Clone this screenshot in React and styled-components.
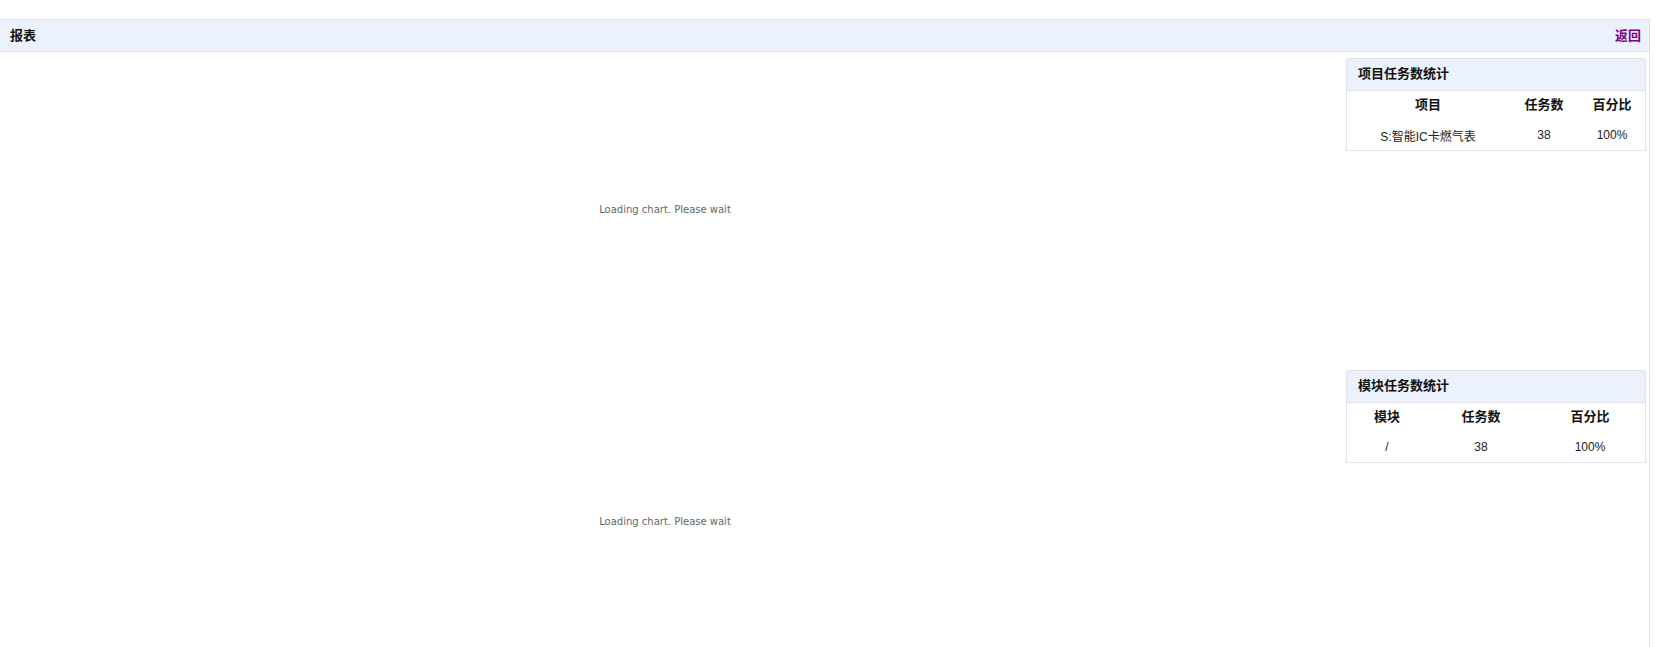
import React from 'react'
import styled, { createGlobalStyle } from 'styled-components'

const GlobalStyle = createGlobalStyle`
  html, body {
    margin: 0;
    padding: 0;
    background: #fff;
  }
  body {
    font-family: Arial, "Liberation Sans", "Noto Sans CJK SC", sans-serif;
    font-size: 12px;
    color: #333;
  }
`;

const Page = styled.div`
  padding-top: 19px;
  width: 1650px;
`;

const Frame = styled.div`
  border-right: 1px solid #dde2ea;
  min-height: 640px;
`;

const Header = styled.div`
  display: flex;
  align-items: center;
  justify-content: space-between;
  box-sizing: border-box;
  height: 33px;
  padding: 0 8px 3px 10px;
  background: #ebf1fd;
  border-top: 1px solid #dde2ea;
  border-bottom: 1px solid #dde2ea;
`;

const HeaderTitle = styled.span`
  font-family: "Noto Sans CJK SC", sans-serif;
  font-weight: bold;
  font-size: 13px;
  color: #111;
`;

const BackLink = styled.a`
  font-family: "Noto Sans CJK SC", sans-serif;
  font-weight: bold;
  font-size: 13px;
  color: #800080;
  text-decoration: none;
  cursor: pointer;
`;

const Body = styled.div`
  display: grid;
  grid-template-columns: 1330px 300px;
  grid-auto-rows: 312px;
  column-gap: 16px;
  padding-right: 3px;
`;

const Chart = styled.div`
  display: flex;
  align-items: center;
  justify-content: center;
  padding-top: 2px;
  font-family: "DejaVu Sans", Verdana, sans-serif;
  font-size: 10px;
  color: #666;
`;

const Side = styled.div`
  padding-top: 6px;
`;

const Card = styled.div`
  border: 1px solid #e0e3e8;
  background: #fff;
`;

const CardTitle = styled.div`
  box-sizing: border-box;
  height: 32px;
  display: flex;
  align-items: center;
  padding: 0 0 5px 11px;
  background: #ebf1fd;
  border-bottom: 1px solid #e0e3e8;
  font-family: "Noto Sans CJK SC", sans-serif;
  font-weight: bold;
  font-size: 13px;
  color: #111;
`;

const Table = styled.table`
  width: 100%;
  border-collapse: collapse;
  table-layout: fixed;
`;

const Th = styled.th`
  height: 25px;
  padding: 0 0 4px;
  text-align: center;
  font-family: "Noto Sans CJK SC", sans-serif;
  font-weight: bold;
  font-size: 13px;
  color: #111;
`;

const Td = styled.td`
  height: 30px;
  padding: 0;
  text-align: center;
  font-family: Arial, "Liberation Sans", "Noto Sans CJK SC", sans-serif;
  font-size: 12px;
  color: #222;
`;

const StatCard = ({ title, cols, rows }) => (
  <Card>
    <CardTitle>{title}</CardTitle>
    <Table>
      <colgroup>
        {cols.map((c) => <col key={c.label} style={{ width: c.width }} />)}
      </colgroup>
      <thead>
        <tr>
          {cols.map((c) => <Th key={c.label}>{c.label}</Th>)}
        </tr>
      </thead>
      <tbody>
        {rows.map((r, i) => (
          <tr key={i}>
            {r.map((v, j) => <Td key={j}>{v}</Td>)}
          </tr>
        ))}
      </tbody>
    </Table>
  </Card>
);

const projectCols = [
  { label: '项目', width: 162 },
  { label: '任务数', width: 70 },
  { label: '百分比', width: 66 },
];

const moduleCols = [
  { label: '模块', width: 80 },
  { label: '任务数', width: 108 },
  { label: '百分比', width: 110 },
];

export default function App() {
  return (
    <>
      <GlobalStyle />
      <Page>
        <Frame>
          <Header>
            <HeaderTitle>报表</HeaderTitle>
            <BackLink href="#">返回</BackLink>
          </Header>
          <Body>
            <Chart>Loading chart. Please wait</Chart>
            <Side>
              <StatCard
                title="项目任务数统计"
                cols={projectCols}
                rows={[['S:智能IC卡燃气表', '38', '100%']]}
              />
            </Side>
            <Chart>Loading chart. Please wait</Chart>
            <Side>
              <StatCard
                title="模块任务数统计"
                cols={moduleCols}
                rows={[['/', '38', '100%']]}
              />
            </Side>
          </Body>
        </Frame>
      </Page>
    </>
  )
}
